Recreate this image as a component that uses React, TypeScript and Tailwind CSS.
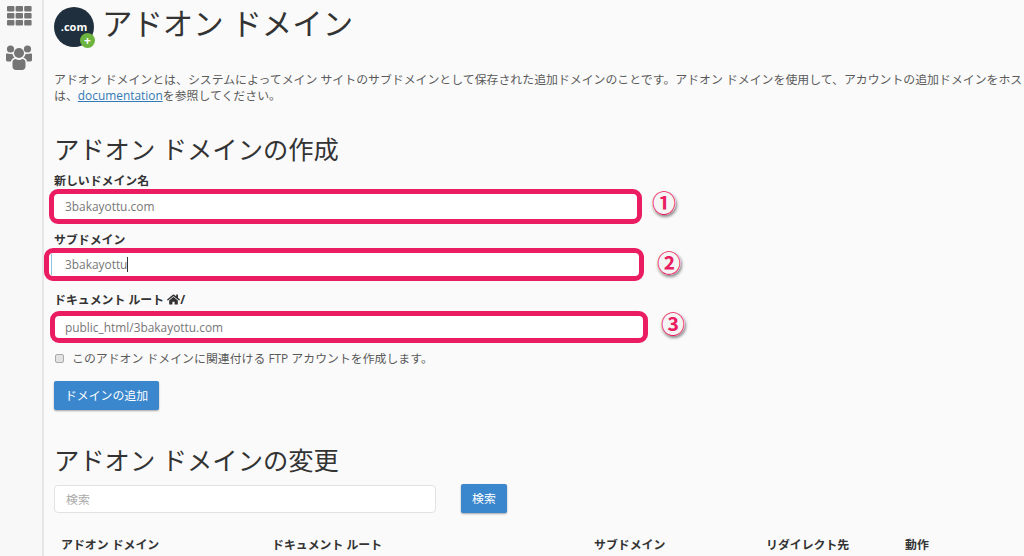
import { FaHome } from 'react-icons/fa';

const cjk = '[font-family:"Open_Sans","Noto_Sans_CJK_JP",sans-serif]';

const columns = [
    { label: 'アドオン ドメイン', width: 'w-[211px]' },
    { label: 'ドキュメント ルート', width: 'w-[322px]' },
    { label: 'サブドメイン', width: 'w-[172px]' },
    { label: 'リダイレクト先', width: 'w-[139px]' },
    { label: '動作', width: 'w-[60px]' },
];

function GridIcon() {
    return (
        <svg width="25" height="20" viewBox="0 0 25 20" fill="#757575">
            {[0, 1, 2].map((row) =>
                [0, 1, 2].map((col) => (
                    <rect key={`${row}-${col}`} x={col * 8.6} y={row * 7} width="7.4" height="5.6" rx="1" />
                ))
            )}
        </svg>
    );
}

function UsersIcon() {
    return (
        <svg width="26" height="25" viewBox="0 0 26 25" fill="#757575" className="mt-[19px]">
            <circle cx="4.5" cy="4" r="3.6" />
            <circle cx="21.5" cy="4" r="3.6" />
            <circle cx="13" cy="8" r="5" />
            <path d="M0 9.5C0 8.6 0.8 8.2 1.6 8.6C3 9.2 5 9.2 6.4 8.8C6.8 10.6 7.6 11.8 8.6 12.8C6.6 13.4 5.4 14.6 5 16.4H1.6C0.6 16.4 0 15.8 0 15Z" />
            <path d="M26 9.5C26 8.6 25.2 8.2 24.4 8.6C23 9.2 21 9.2 19.6 8.8C19.2 10.6 18.4 11.8 17.4 12.8C19.4 13.4 20.6 14.6 21 16.4H24.4C25.4 16.4 26 15.8 26 15Z" />
            <path d="M6.5 17.5C6.5 15.4 7.8 14 9.6 14C11.6 15.2 14.4 15.2 16.4 14C18.2 14 19.5 15.4 19.5 17.5V21.5C19.5 23.6 18 25 16 25H10C8 25 6.5 23.6 6.5 21.5Z" />
        </svg>
    );
}

function DotComLogo() {
    return (
        <div className="relative flex h-10 w-10 shrink-0 items-center justify-center rounded-full bg-[#1f2f3d]">
            <span className="text-[11px] font-bold text-white [font-family:'Open_Sans',sans-serif]">.com</span>
            <span className="absolute right-[-1px] bottom-[-1px] flex h-[15px] w-[15px] items-center justify-center rounded-full bg-[#6cb33f] text-[12px] leading-none font-bold text-white">
                +
            </span>
        </div>
    );
}

function Badge({ glyph, className }: { glyph: string; className: string }) {
    return (
        <span
            className={`flex h-[24px] w-[24px] shrink-0 items-center justify-center rounded-full bg-[#f4f4f4] text-[24px] leading-none font-bold text-[#ea1c62] shadow-[1px_2px_3px_rgba(0,0,0,0.45)] ${className}`}
        >
            {glyph}
        </span>
    );
}

export default function App() {
    return (
        <div className={`flex h-[556px] w-[1024px] overflow-hidden bg-[#fafafa] text-[#333] ${cjk}`}>
            <aside className="flex w-[44px] shrink-0 flex-col items-center border-r-[2px] border-[#e6e6e6] bg-[#f8f8f8] pt-[6px] pr-[4px]">
                <GridIcon />
                <UsersIcon />
            </aside>

            <main className="min-w-0 flex-1 overflow-hidden pl-[10px] text-[11.9px]">
                <div className="flex items-start gap-[8px] pt-[7px]">
                    <DotComLogo />
                    <h1 className="mt-[-1px] text-[30.4px] leading-[36px] font-normal text-[#333]">アドオン ドメイン</h1>
                </div>

                <p className="mt-[24px] leading-[16px] whitespace-nowrap text-[#5a5a5a]">
                    アドオン ドメインとは、システムによってメイン サイトのサブドメインとして保存された追加ドメインのことです。アドオン ドメインを使用して、アカウントの追加ドメインをホスト
                    <br />
                    は、<span className="text-[#337ab7] underline">documentation</span>を参照してください。
                </p>

                <h2 className="mt-[30px] text-[25.3px] leading-[32px] font-normal">アドオン ドメインの作成</h2>

                <label className="mt-[7px] block leading-[16px] font-bold">新しいドメイン名</label>
                <div className="mt-[1px] flex items-center">
                    <div className="ml-[-5px] h-[35px] w-[593px] rounded-[9px] border-[5px] border-[#ea1c62] bg-white pl-[11px] leading-[25px] text-[#777]">
                        3bakayottu.com
                    </div>
                    <Badge glyph="①" className="mb-[7px] ml-[10px]" />
                </div>

                <label className="mt-[7px] block leading-[16px] font-bold">サブドメイン</label>
                <div className="mt-[1px] flex items-center">
                    <div className="ml-[-10px] flex h-[33px] w-[600px] items-center rounded-[9px] border-[5px] border-[#ea1c62] bg-white text-[#777]">
                        <span className="ml-[2px] h-[21px] w-px bg-[#8ec5e0]" />
                        <span className="ml-[13px]">3bakayottu</span>
                        <span className="h-[15px] w-px bg-[#333]" />
                    </div>
                    <Badge glyph="②" className="mb-[3px] ml-[13px]" />
                </div>

                <label className="mt-[10px] flex items-center leading-[16px] font-bold">
                    ドキュメント ルート&nbsp;
                    <FaHome size={13} className="text-[#333]" />/
                </label>
                <div className="mt-[4px] flex items-center">
                    <div className="ml-[-4px] h-[32px] w-[598px] rounded-[9px] border-[5px] border-[#ea1c62] bg-white pl-[10px] leading-[22px] text-[#777]">
                        public_html/3bakayottu.com
                    </div>
                    <Badge glyph="③" className="mb-[6px] ml-[13px]" />
                </div>

                <label className="mt-[7px] flex items-center leading-[16px] text-[#5a5a5a]">
                    <input
                        type="checkbox"
                        className="mr-[8px] ml-[1px] h-[9px] w-[9px] appearance-none rounded-[2px] border border-[#aaa] bg-[#e2e2e2]"
                    />
                    このアドオン ドメインに関連付ける FTP アカウントを作成します。
                </label>

                <button className="mt-[15px] block h-[29px] w-[105px] rounded-[2px] bg-[#3a87cd] text-white shadow-[0_1px_2px_rgba(0,0,0,0.35)]">
                    ドメインの追加
                </button>

                <h2 className="mt-[34px] text-[25.3px] leading-[32px] font-normal">アドオン ドメインの変更</h2>

                <div className="mt-[8px] flex items-center">
                    <input
                        placeholder="検索"
                        className="h-[28px] w-[382px] rounded-[4px] border border-[#e2e2e2] bg-white px-[11px] placeholder:text-[#aaa]"
                    />
                    <button className="ml-[25px] h-[29px] w-[46px] rounded-[2px] bg-[#3a87cd] text-white shadow-[0_1px_2px_rgba(0,0,0,0.35)]">
                        検索
                    </button>
                </div>

                <div className="mt-[23px] flex pl-[7px] leading-[16px] font-bold">
                    {columns.map((col) => (
                        <span key={col.label} className={col.width}>
                            {col.label}
                        </span>
                    ))}
                </div>
            </main>
        </div>
    );
}
